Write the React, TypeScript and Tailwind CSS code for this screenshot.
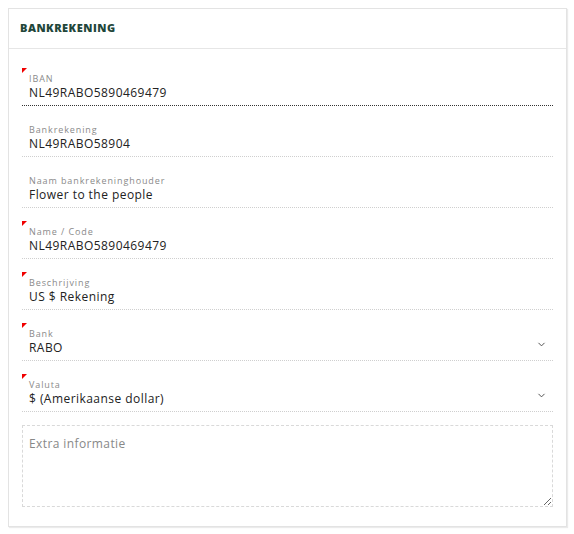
import { ChevronDown } from 'lucide-react';

const fields = [
  { label: 'IBAN', value: 'NL49RABO5890469479', required: true, active: true },
  { label: 'Bankrekening', value: 'NL49RABO58904' },
  { label: 'Naam bankrekeninghouder', value: 'Flower to the people' },
  { label: 'Name / Code', value: 'NL49RABO5890469479', required: true },
  { label: 'Beschrijving', value: 'US $ Rekening', required: true },
  { label: 'Bank', value: 'RABO', required: true, select: true },
  { label: 'Valuta', value: '$ (Amerikaanse dollar)', required: true, select: true },
];

function Field({ label, value, required, active, select }: any) {
  return (
    <div
      className={
        'relative h-[51px] pl-[7px] pr-[8px] pt-[18px] border-b border-dotted ' +
        (active ? 'border-[#333]' : 'border-[#cfcfcf]')
      }
    >
      {required && (
        <span className="absolute left-0 top-[13px] w-0 h-0 border-t-[5px] border-t-[#f00000] border-r-[5px] border-r-transparent" />
      )}
      <div className="text-[9px] leading-[11px] tracking-[0.9px] text-[#8a8a8a]">{label}</div>
      <div className="flex items-center justify-between">
        <div className="text-[12px] leading-[17px] tracking-[0.45px] text-[#222]">{value}</div>
        {select && (
          <ChevronDown size={11} strokeWidth={2} className="text-[#444] mr-[-2px] mt-[-6px]" />
        )}
      </div>
    </div>
  );
}

export default function App() {
  return (
    <div className="w-[574px] h-[534px] bg-white p-[8px] font-['Open_Sans',sans-serif]">
      <div className="w-[559px] h-[519px] border border-[#e3e3e3] shadow-[1px_1px_1px_rgba(0,0,0,0.08)] bg-white">
        <div className="h-[40px] flex items-center px-[11px] border-b border-[#e6e6e6]">
          <h2 className="text-[11px] font-extrabold tracking-[0.5px] text-[#22463a]">BANKREKENING</h2>
        </div>
        <div className="px-[13px] pt-[6px]">
          {fields.map((f) => (
            <Field key={f.label} {...f} />
          ))}
          <textarea
            placeholder="Extra informatie"
            className="mt-[13px] block w-full h-[82px] border border-dashed border-[#d9d9d9] px-[6px] py-[9px] text-[12px] tracking-[0.4px] text-[#222] placeholder:text-[#888] outline-none resize-y"
          />
        </div>
      </div>
    </div>
  );
}
